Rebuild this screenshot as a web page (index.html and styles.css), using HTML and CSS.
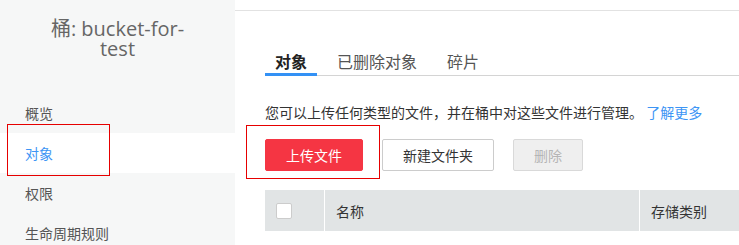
FILE: index.html
```html
<!DOCTYPE html>
<html lang="zh-CN">
<head>
<meta charset="utf-8">
<title>bucket-for-test</title>
<link rel="stylesheet" href="styles.css">
</head>
<body>
<div class="page">
  <aside class="sidebar">
    <h1 class="bucket-title">桶: bucket-for-test</h1>
    <nav class="side-nav">
      <a class="side-item">概览</a>
      <a class="side-item active">对象</a>
      <a class="side-item">权限</a>
      <a class="side-item">生命周期规则</a>
    </nav>
  </aside>
  <main class="main">
    <div class="topbar"></div>
    <div class="tabs">
      <span class="tab active">对象</span>
      <span class="tab">已删除对象</span>
      <span class="tab">碎片</span>
    </div>
    <p class="desc">您可以上传任何类型的文件，并在桶中对这些文件进行管理。 <a class="link">了解更多</a></p>
    <div class="toolbar">
      <button class="btn btn-primary">上传文件</button>
      <button class="btn btn-default">新建文件夹</button>
      <button class="btn btn-disabled">删除</button>
    </div>
    <div class="table-head">
      <div class="th th-check"><span class="checkbox"></span></div>
      <div class="th">名称</div>
      <div class="th">存储类别</div>
    </div>
  </main>
  <div class="mark mark-side"></div>
  <div class="mark mark-upload"></div>
</div>
</body>
</html>
```

FILE: styles.css
```css
* { box-sizing: border-box; }
html, body { margin: 0; padding: 0; }
body {
  font-family: "Noto Sans CJK SC", "Noto Sans", sans-serif;
  font-size: 14px;
  color: #333;
  background: #fff;
  width: 739px;
  height: 245px;
  overflow: hidden;
}
.page {
  position: relative;
  display: flex;
  height: 245px;
}
.sidebar {
  width: 235px;
  flex: none;
  background: #f6f7f7;
  height: 245px;
}
.bucket-title {
  margin: 0;
  padding: 19px 36px 0;
  font-family: "Open Sans", "Noto Sans CJK SC", sans-serif;
  font-weight: 400;
  font-size: 20px;
  line-height: 20px;
  color: #666;
  text-align: center;
}
.side-nav {
  display: flex;
  flex-direction: column;
  margin-top: 34px;
}
.side-item {
  display: block;
  height: 40px;
  line-height: 40px;
  padding-left: 25px;
  color: #555;
  font-size: 14px;
}
.side-item.active {
  background: #fff;
  color: #3d95f5;
}
.main {
  flex: 1;
  min-width: 0;
  overflow: hidden;
}
.topbar {
  height: 11px;
  border-bottom: 1px solid #e2e2e2;
}
.tabs {
  display: flex;
  margin: 39px 0 0 30px;
  border-bottom: 1px solid #d4d4d4;
  gap: 10px;
}
.tab {
  font-size: 16px;
  line-height: 22px;
  padding: 0 10px 1px;
  border-bottom: 3px solid transparent;
  margin-bottom: -1px;
  color: #555;
}
.tab.active {
  color: #222;
  font-weight: 700;
  border-bottom-color: #3391f5;
}
.desc {
  margin: 26px 0 0 30px;
  line-height: 20px;
  color: #333;
  white-space: nowrap;
}
.link { color: #3d95f5; }
.toolbar {
  display: flex;
  gap: 19px;
  margin: 17px 0 0 30px;
}
.btn {
  height: 32px;
  padding: 0 20px;
  font-family: inherit;
  font-size: 14px;
  border-radius: 2px;
  border: 1px solid #ccc;
  background: #fff;
  color: #333;
  line-height: 30px;
}
.btn-primary {
  background: #f53543;
  border-color: #f53543;
  color: #fff;
}
.btn-disabled {
  background: #efefef;
  border-color: #d9d9d9;
  color: #b5b5b5;
}
.table-head {
  display: grid;
  grid-template-columns: 59px 314px 1fr;
  column-gap: 1px;
  margin: 19px 0 0 30px;
  height: 41px;
  width: 520px;
}
.th {
  background: #e1e4e5;
  display: flex;
  align-items: center;
  padding-left: 11px;
  color: #333;
}
.th-check { padding-left: 11px; }
.checkbox {
  width: 16px;
  height: 16px;
  background: #fff;
  border: 1px solid #ccc;
  border-radius: 2px;
  margin-top: 1px;
}
.mark {
  position: absolute;
  border: 1px solid #e60000;
  pointer-events: none;
}
.mark-side { left: 7px; top: 124px; width: 103px; height: 52px; }
.mark-upload { left: 246px; top: 125px; width: 134px; height: 54px; }
```
